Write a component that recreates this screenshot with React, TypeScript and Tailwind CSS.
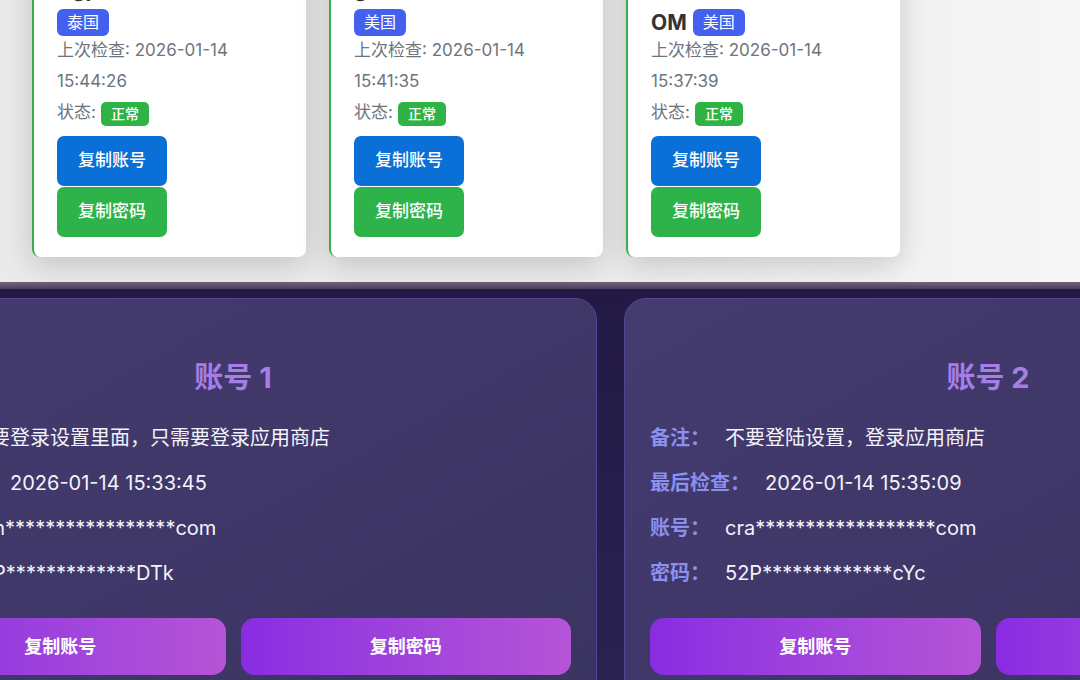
import React from "react";

type TopCard = {
  line1: string;
  line2Text?: string;
  region: string;
  date: string;
  time: string;
};

const topCards: TopCard[] = [
  { line1: "Agple ID 共享账号", region: "泰国", date: "2026-01-14", time: "15:44:26" },
  { line1: "gmail 共享账号 ID", region: "美国", date: "2026-01-14", time: "15:41:35" },
  { line1: "SHAREUS8@GMAIL.C", line2Text: "OM", region: "美国", date: "2026-01-14", time: "15:37:39" },
];

type Account = {
  title: string;
  note: string;
  date: string;
  account: string;
  password: string;
};

const accounts: Account[] = [
  {
    title: "账号 1",
    note: "不要登录设置里面，只需要登录应用商店",
    date: "2026-01-14 15:33:45",
    account: "cun*****************com",
    password: "x5P*************DTk",
  },
  {
    title: "账号 2",
    note: "不要登陆设置，登录应用商店",
    date: "2026-01-14 15:35:09",
    account: "cra******************com",
    password: "52P*************cYc",
  },
];

function TopCardView({ c }: { c: TopCard }) {
  return (
    <div className="bg-white border-l-2 border-[#35ae4b] rounded-lg shadow-[0_8px_30px_rgba(0,0,0,0.17)] pt-5 pb-5 pl-[23px] pr-5">
      <div className="h-[28px] leading-[28px] mb-[5px] text-[21px] font-bold text-[#333] whitespace-nowrap overflow-hidden">
        {c.line1}
      </div>
      <div className="h-[26px] flex items-start gap-[6px]">
        {c.line2Text && (
          <span className="text-[21px] font-bold leading-[27px] text-[#333]">{c.line2Text}</span>
        )}
        <span className="h-[27px] px-[10px] rounded-md bg-[#4361ee] text-white text-[16px] leading-[27px]">
          {c.region}
        </span>
      </div>
      <div className="text-[17px] leading-[31px] text-[#6c757d]">
        上次检查: {c.date}
        <br />
        {c.time}
      </div>
      <div className="text-[17px] leading-[31px] text-[#6c757d] flex items-center">
        <span>状态:</span>
        <span className="ml-[5px] mt-[3px] h-[24px] px-[10px] rounded-[5px] bg-[#2fb344] text-white text-[14px] leading-[24px] font-medium">
          正常
        </span>
      </div>
      <div className="mt-2 flex flex-col items-start gap-[1px]">
        <button className="h-[50px] px-[21px] rounded-[7px] bg-[#0a6fd6] text-white text-[17px] font-medium">
          复制账号
        </button>
        <button className="h-[50px] px-[21px] rounded-[7px] bg-[#2eb34a] text-white text-[17px] font-medium">
          复制密码
        </button>
      </div>
    </div>
  );
}

function Row({ label, value }: { label: string; value: string }) {
  return (
    <div className="h-[30px] flex items-center text-[20px] leading-[30px]">
      <span className="font-bold text-[#8b8fee] mr-[15px]">{label}</span>
      <span className="text-[#f4f2fb] whitespace-nowrap">{value}</span>
    </div>
  );
}

function AccountCard({ a }: { a: Account }) {
  return (
    <div className="w-[728px] shrink-0 rounded-[22px] border border-[#56439a] bg-linear-to-br from-[#443b6f] to-[#3a3461] pt-[62px] px-[25px] pb-8">
      <div className="text-center text-[29px] font-bold leading-[34px] text-[#a57ee6]">{a.title}</div>
      <div className="mt-[28px] flex flex-col gap-[15px]">
        <Row label="备注：" value={a.note} />
        <Row label="最后检查：" value={a.date} />
        <Row label="账号：" value={a.account} />
        <Row label="密码：" value={a.password} />
      </div>
      <div className="mt-[30px] grid grid-cols-2 gap-[15px]">
        <button className="h-[57px] rounded-[14px] bg-linear-to-r from-[#8a2be2] to-[#b654d6] text-white text-[18px] font-bold">
          复制账号
        </button>
        <button className="h-[57px] rounded-[14px] bg-linear-to-r from-[#8a2be2] to-[#b654d6] text-white text-[18px] font-bold">
          复制密码
        </button>
      </div>
    </div>
  );
}

export default function App() {
  return (
    <div className="w-[1080px] h-[680px] overflow-hidden font-[Inter,'Noto_Sans_CJK_SC',sans-serif]">
      <div className="-mt-[64px] bg-linear-to-r from-[#eaeaea] via-[#ebebeb] to-[#f6f6f6] pt-5 pb-[25px] pl-8">
        <div className="grid grid-cols-[274px_274px_274px] gap-x-[23px]">
          {topCards.map((c, i) => (
            <TopCardView key={i} c={c} />
          ))}
        </div>
      </div>
      <div className="bg-[#282150] h-[420px]">
        <div className="h-[7px] bg-linear-to-b from-[#746676] to-[#4b3f63]" />
        <div className="flex gap-[27px] -ml-[131px] pt-[9px] bg-linear-to-b from-[#221a44] to-[#2a2352]">
          {accounts.map((a, i) => (
            <AccountCard key={i} a={a} />
          ))}
        </div>
      </div>
    </div>
  );
}
